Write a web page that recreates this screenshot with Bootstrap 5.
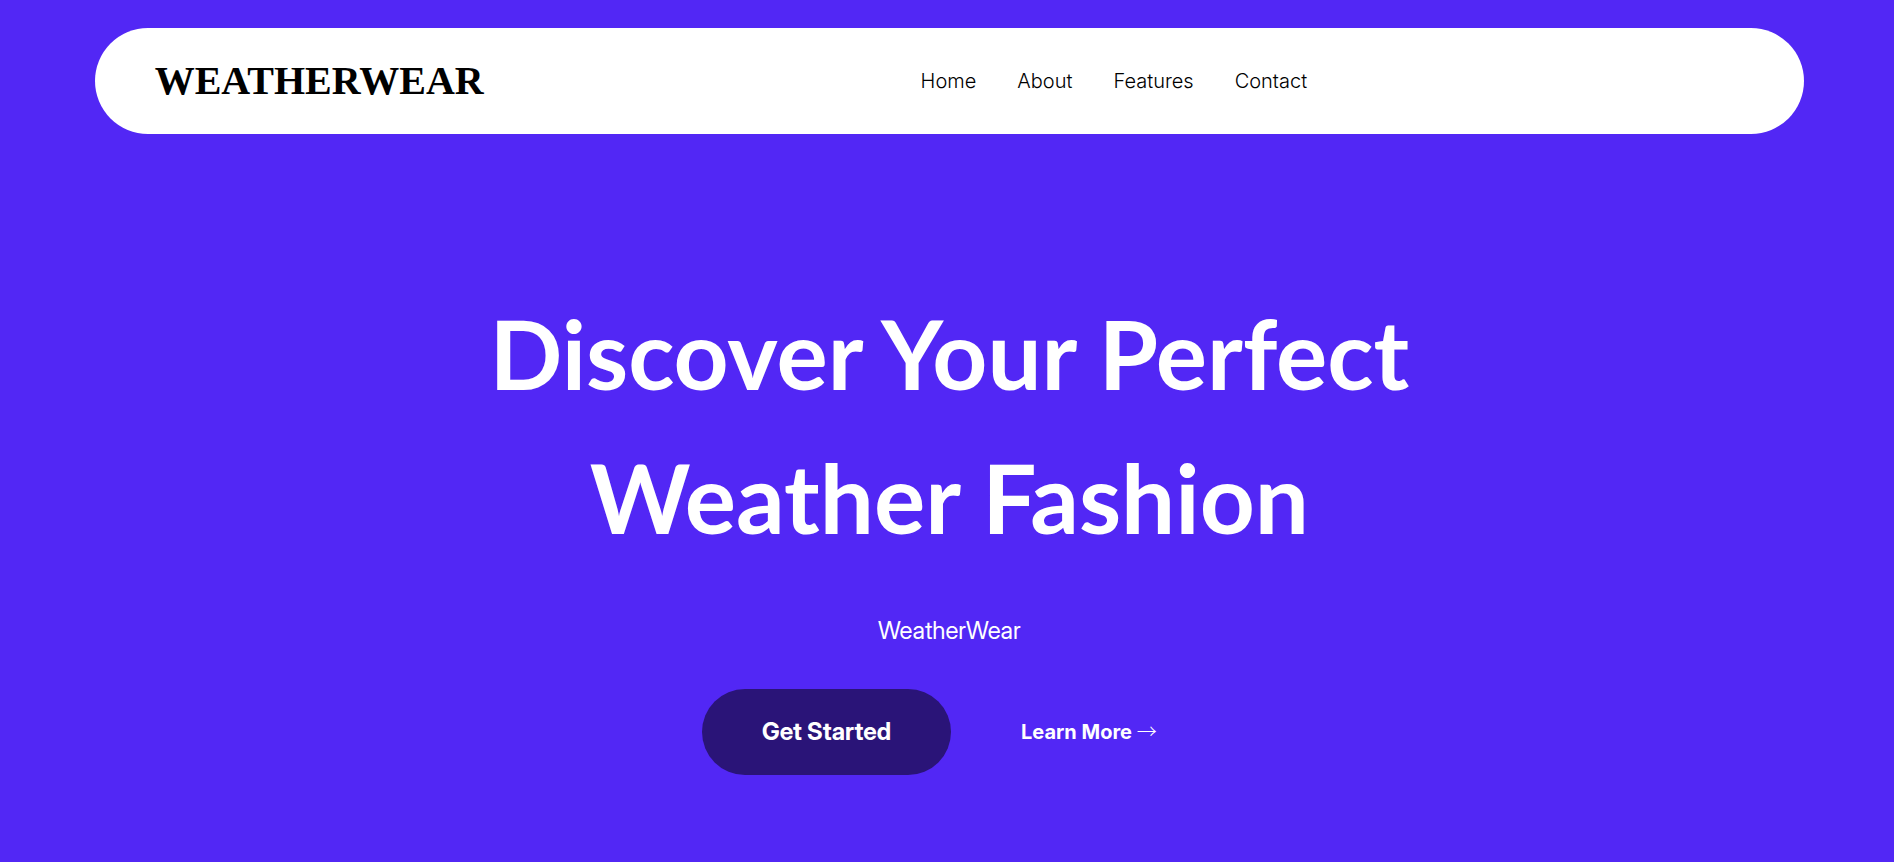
<!DOCTYPE html>
<html lang="en">
<head>
<meta charset="utf-8">
<meta name="viewport" content="width=device-width, initial-scale=1">
<title>WeatherWear</title>
<link href="https://cdn.jsdelivr.net/npm/bootstrap@5.3.0/dist/css/bootstrap.min.css" rel="stylesheet">
<style>
  body { background: #5227f5; font-family: Inter, sans-serif; }
  .page-shell { width: 90.25%; margin-left: 5%; padding-top: 28px; }
  .pill-nav { min-height: 106px; padding: 0 60px; }
  .pill-nav .navbar-brand { font: 700 40px/48px "Liberation Serif", serif; color: #000; }
  .menu-links { gap: 41px; }
  .menu-links .nav-link { color: #000; font-size: 20px; line-height: 30px; font-weight: 300; padding: 0; }
  .hero { padding-top: 147px; }
  .hero-title { font: 700 96px/144px Lato, sans-serif; }
  .hero-text { font: 400 24px/36px "Inter Display", Inter, sans-serif; margin: 44px 0 40px; }
  .btn-start { --bs-btn-color: #fff; --bs-btn-bg: #2a1478; --bs-btn-hover-color: #fff; --bs-btn-hover-bg: #1f0e5c; border: 0; padding: 25px 60px; font: 700 24px/36px "Inter Display", Inter, sans-serif; }
  .hero-actions { gap: 30px; }
  .link-more { font-size: 20px; font-weight: 700; padding: 0 40px; }
  .arrow-mark { font-family: "Noto Sans CJK JP", sans-serif; font-weight: 300; line-height: 1; }
</style>
</head>
<body>
<div class="page-shell">
  <header>
    <nav class="navbar pill-nav bg-white rounded-pill">
      <a class="navbar-brand m-0" href="#">WEATHERWEAR</a>
      <ul class="navbar-nav flex-row menu-links mx-auto">
        <li class="nav-item"><a class="nav-link" href="#">Home</a></li>
        <li class="nav-item"><a class="nav-link" href="#">About</a></li>
        <li class="nav-item"><a class="nav-link" href="#">Features</a></li>
        <li class="nav-item"><a class="nav-link" href="#">Contact</a></li>
      </ul>
    </nav>
  </header>
  <main class="hero text-center text-white">
    <h1 class="hero-title mb-0">Discover Your Perfect<br>Weather Fashion</h1>
    <p class="hero-text">WeatherWear</p>
    <div class="hero-actions d-flex flex-wrap justify-content-center align-items-center">
      <button type="button" class="btn btn-start rounded-pill">Get Started</button>
      <a class="link-more text-white text-decoration-none" href="#">Learn More <span class="arrow-mark">→</span></a>
    </div>
  </main>
</div>
<script src="https://cdn.jsdelivr.net/npm/bootstrap@5.3.0/dist/js/bootstrap.bundle.min.js"></script>
</body>
</html>
